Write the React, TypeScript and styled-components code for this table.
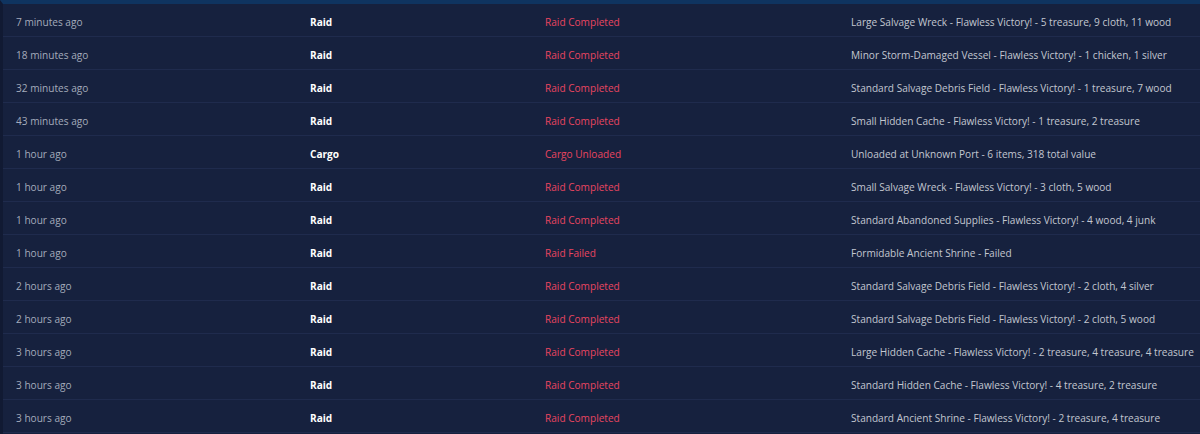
import React from "react";
import styled, { createGlobalStyle } from "styled-components";

const Global = createGlobalStyle`
  html, body { margin: 0; padding: 0; background: #16213e; }
  body { font-family: "Open Sans", "Liberation Sans", sans-serif; overflow: hidden; }
`;

const Frame = styled.div`
  width: 1200px;
  height: 434px;
  background: #16213e;
  border-top: 4px solid #0f3460;
  border-left: 3px solid #111a33;
  box-sizing: border-box;
  overflow: hidden;
`;

const Row = styled.div`
  display: grid;
  grid-template-columns: 294px 235px 306px 1fr;
  height: 33px;
  align-items: center;
  border-bottom: 1px solid #1f2b4d;
  box-sizing: border-box;
  white-space: nowrap;
  padding-top: 3px;
`;

const Cell = styled.div<{ $kind: "time" | "type" | "status" | "detail" }>`
  padding-left: 13px;
  font-size: 10.1px;
  overflow: visible;
  color: ${(p) =>
    p.$kind === "time"
      ? "#a4abbb"
      : p.$kind === "type"
      ? "#ffffff"
      : p.$kind === "status"
      ? "#e94560"
      : "#c3c7d0"};
  font-weight: ${(p) => (p.$kind === "type" ? 700 : 400)};
`;

const rows: [string, string, string, string][] = [
  ["7 minutes ago", "Raid", "Raid Completed", "Large Salvage Wreck - Flawless Victory! - 5 treasure, 9 cloth, 11 wood"],
  ["18 minutes ago", "Raid", "Raid Completed", "Minor Storm-Damaged Vessel - Flawless Victory! - 1 chicken, 1 silver"],
  ["32 minutes ago", "Raid", "Raid Completed", "Standard Salvage Debris Field - Flawless Victory! - 1 treasure, 7 wood"],
  ["43 minutes ago", "Raid", "Raid Completed", "Small Hidden Cache - Flawless Victory! - 1 treasure, 2 treasure"],
  ["1 hour ago", "Cargo", "Cargo Unloaded", "Unloaded at Unknown Port - 6 items, 318 total value"],
  ["1 hour ago", "Raid", "Raid Completed", "Small Salvage Wreck - Flawless Victory! - 3 cloth, 5 wood"],
  ["1 hour ago", "Raid", "Raid Completed", "Standard Abandoned Supplies - Flawless Victory! - 4 wood, 4 junk"],
  ["1 hour ago", "Raid", "Raid Failed", "Formidable Ancient Shrine - Failed"],
  ["2 hours ago", "Raid", "Raid Completed", "Standard Salvage Debris Field - Flawless Victory! - 2 cloth, 4 silver"],
  ["2 hours ago", "Raid", "Raid Completed", "Standard Salvage Debris Field - Flawless Victory! - 2 cloth, 5 wood"],
  ["3 hours ago", "Raid", "Raid Completed", "Large Hidden Cache - Flawless Victory! - 2 treasure, 4 treasure, 4 treasure"],
  ["3 hours ago", "Raid", "Raid Completed", "Standard Hidden Cache - Flawless Victory! - 4 treasure, 2 treasure"],
  ["3 hours ago", "Raid", "Raid Completed", "Standard Ancient Shrine - Flawless Victory! - 2 treasure, 4 treasure"],
];

export default function App() {
  return (
    <>
      <Global />
      <Frame>
        {rows.map((r, i) => (
          <Row key={i}>
            <Cell $kind="time">{r[0]}</Cell>
            <Cell $kind="type">{r[1]}</Cell>
            <Cell $kind="status">{r[2]}</Cell>
            <Cell $kind="detail">{r[3]}</Cell>
          </Row>
        ))}
      </Frame>
    </>
  );
}
